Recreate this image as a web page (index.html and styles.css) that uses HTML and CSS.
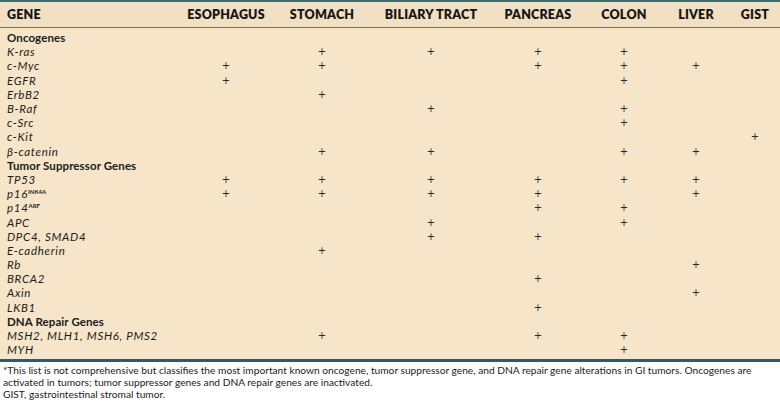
FILE: index.html
```html
<!DOCTYPE html>
<html>
<head>
<meta charset="utf-8">
<link rel="stylesheet" href="styles.css">
</head>
<body>
<div class="page">
<table class="genes">
<colgroup>
<col class="c-gene"><col class="c-eso"><col class="c-sto"><col class="c-bil"><col class="c-pan"><col class="c-col"><col class="c-liv"><col class="c-gist">
</colgroup>
<thead>
<tr><th class="gene">GENE</th><th>ESOPHAGUS</th><th>STOMACH</th><th>BILIARY TRACT</th><th>PANCREAS</th><th>COLON</th><th>LIVER</th><th>GIST</th></tr>
</thead>
<tbody>
<tr class="first"><td class="sec">Oncogenes</td><td></td><td></td><td></td><td></td><td></td><td></td><td></td></tr>
<tr><td class="g">K-ras</td><td></td><td>+</td><td>+</td><td>+</td><td>+</td><td></td><td></td></tr>
<tr><td class="g">c-Myc</td><td>+</td><td>+</td><td></td><td>+</td><td>+</td><td>+</td><td></td></tr>
<tr><td class="g">EGFR</td><td>+</td><td></td><td></td><td></td><td>+</td><td></td><td></td></tr>
<tr><td class="g">ErbB2</td><td></td><td>+</td><td></td><td></td><td></td><td></td><td></td></tr>
<tr><td class="g">B-Raf</td><td></td><td></td><td>+</td><td></td><td>+</td><td></td><td></td></tr>
<tr><td class="g">c-Src</td><td></td><td></td><td></td><td></td><td>+</td><td></td><td></td></tr>
<tr><td class="g">c-Kit</td><td></td><td></td><td></td><td></td><td></td><td></td><td>+</td></tr>
<tr><td class="g">β-catenin</td><td></td><td>+</td><td>+</td><td></td><td>+</td><td>+</td><td></td></tr>
<tr><td class="sec">Tumor Suppressor Genes</td><td></td><td></td><td></td><td></td><td></td><td></td><td></td></tr>
<tr><td class="g">TP53</td><td>+</td><td>+</td><td>+</td><td>+</td><td>+</td><td>+</td><td></td></tr>
<tr><td class="g">p16<sup>INK4A</sup></td><td>+</td><td>+</td><td>+</td><td>+</td><td></td><td>+</td><td></td></tr>
<tr><td class="g">p14<sup>ARF</sup></td><td></td><td></td><td></td><td>+</td><td>+</td><td></td><td></td></tr>
<tr><td class="g">APC</td><td></td><td></td><td>+</td><td></td><td>+</td><td></td><td></td></tr>
<tr><td class="g">DPC4, SMAD4</td><td></td><td></td><td>+</td><td>+</td><td></td><td></td><td></td></tr>
<tr><td class="g">E-cadherin</td><td></td><td>+</td><td></td><td></td><td></td><td></td><td></td></tr>
<tr><td class="g">Rb</td><td></td><td></td><td></td><td></td><td></td><td>+</td><td></td></tr>
<tr><td class="g">BRCA2</td><td></td><td></td><td></td><td>+</td><td></td><td></td><td></td></tr>
<tr><td class="g">Axin</td><td></td><td></td><td></td><td></td><td></td><td>+</td><td></td></tr>
<tr><td class="g">LKB1</td><td></td><td></td><td></td><td>+</td><td></td><td></td><td></td></tr>
<tr><td class="sec">DNA Repair Genes</td><td></td><td></td><td></td><td></td><td></td><td></td><td></td></tr>
<tr><td class="g">MSH2, MLH1, MSH6, PMS2</td><td></td><td>+</td><td></td><td>+</td><td>+</td><td></td><td></td></tr>
<tr class="last"><td class="g">MYH</td><td></td><td></td><td></td><td></td><td>+</td><td></td><td></td></tr>
</tbody>
</table>
<div class="notes">
<p>*This list is not comprehensive but classifies the most important known oncogene, tumor suppressor gene, and DNA repair gene alterations in GI tumors. Oncogenes are activated in tumors; tumor suppressor genes and DNA repair genes are inactivated.</p>
<p>GIST, gastrointestinal stromal tumor.</p>
</div>
</div>
</body>
</html>
```
FILE: styles.css
```css
html, body {
  margin: 0;
  padding: 0;
  background: #ffffff;
}
.page {
  width: 780px;
  font-family: "Lato", "Open Sans", sans-serif;
  color: #1b1b1b;
}
.genes {
  width: 780px;
  border-collapse: collapse;
  table-layout: fixed;
  background: #f6e5c8;
  border-top: 2px solid #3d6a70;
  border-bottom: 3px solid #235c7c;
}
.c-gene { width: 180px; }
.c-eso { width: 92px; }
.c-sto { width: 100px; }
.c-bil { width: 118px; }
.c-pan { width: 96px; }
.c-col { width: 76px; }
.c-liv { width: 68px; }
.c-gist { width: 50px; }
.genes thead th {
  background: #f3dfc2;
  font-size: 12.5px;
  font-weight: 800;
  text-align: center;
  height: 25px;
  padding: 0;
  border-bottom: 1px solid #4f7e80;
  letter-spacing: 0.2px;
  color: #161616;
}
.genes thead th.gene {
  text-align: left;
  padding-left: 7px;
}
.genes td {
  padding: 0;
  height: 14.2px;
  line-height: 14px;
  font-family: "DejaVu Sans", sans-serif;
  font-size: 10px;
  text-align: center;
  font-weight: 400;
  color: #2a2a2a;
}
.genes td.g, .genes td.sec {
  font-family: "Lato", "Open Sans", sans-serif;
  text-align: left;
  padding-left: 7px;
  white-space: nowrap;
  color: #1b1b1b;
}
.genes td.g {
  font-size: 11.5px;
  font-style: italic;
  font-weight: 400;
  letter-spacing: 0.7px;
}
.genes td.sec {
  font-size: 11.5px;
  font-weight: 700;
  letter-spacing: 0.1px;
}
.genes tr.first td { padding-top: 3px; }
.genes tr.last td { padding-bottom: 2px; }
.genes sup {
  font-size: 6px;
  font-style: normal;
  font-weight: 700;
  letter-spacing: 0;
  vertical-align: 4px;
  line-height: 0;
}
.notes {
  padding: 2px 0 0 3px;
  font-size: 10.2px;
  line-height: 12px;
}
.notes p {
  margin: 0;
}
```
